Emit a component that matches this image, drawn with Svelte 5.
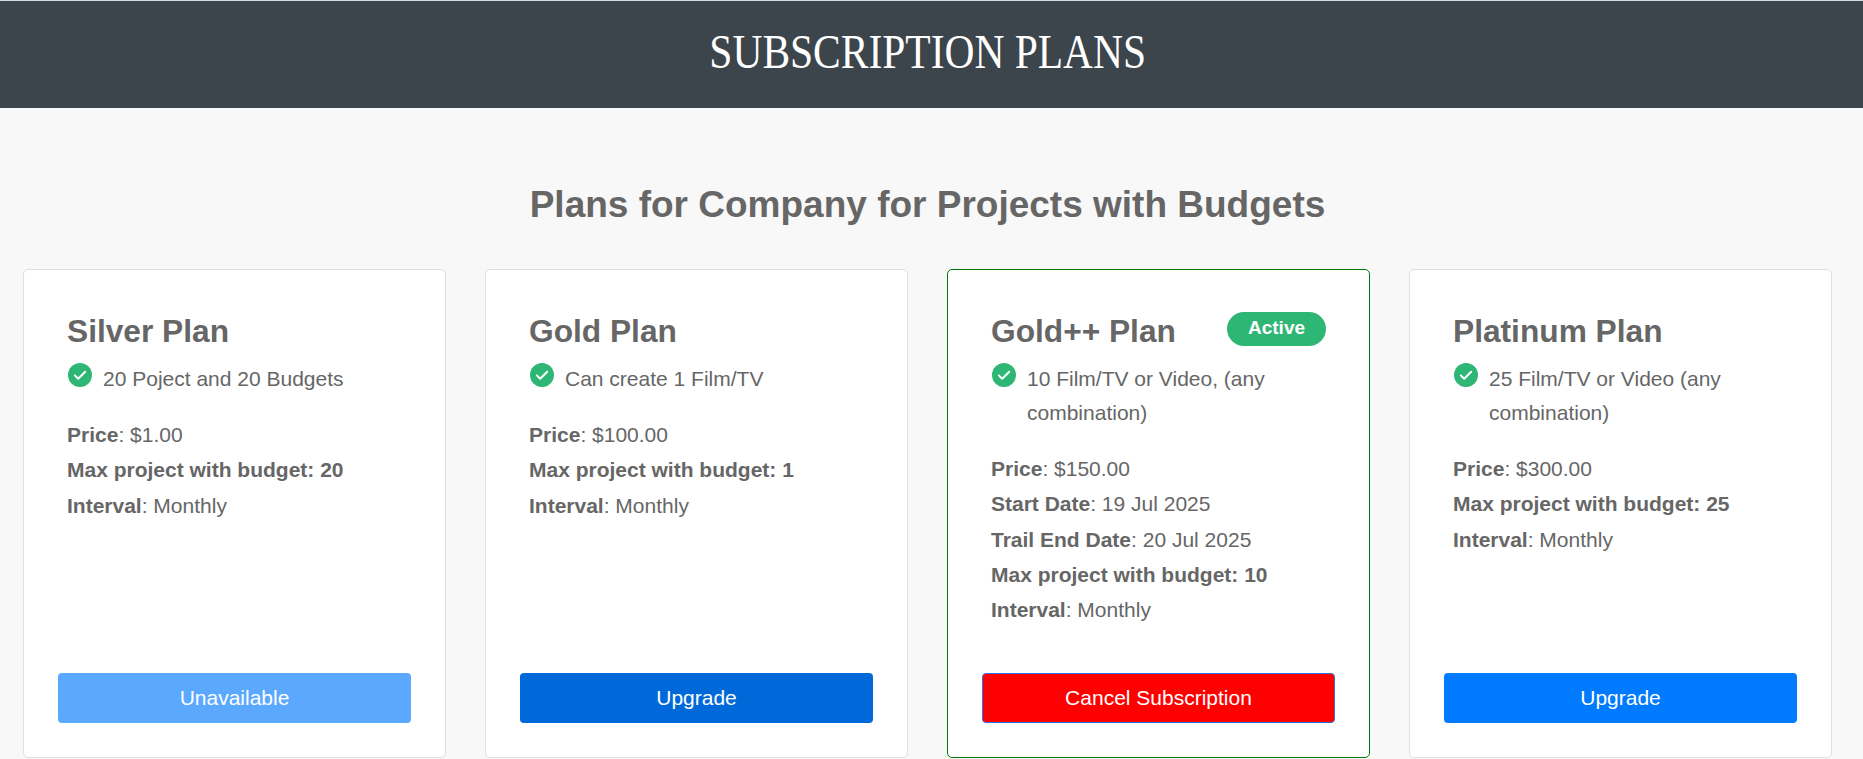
<script>
  const plans = [
    { name: 'Silver Plan', feature: '20 Poject and 20 Budgets', rows: [['Price', ': $1.00'], ['Max project with budget: 20', ''], ['Interval', ': Monthly']], action: 'Unavailable', kind: 'muted' },
    { name: 'Gold Plan', feature: 'Can create 1 Film/TV', rows: [['Price', ': $100.00'], ['Max project with budget: 1', ''], ['Interval', ': Monthly']], action: 'Upgrade', kind: 'deep' },
    { name: 'Gold++ Plan', active: true, feature: '10 Film/TV or Video, (any combination)', rows: [['Price', ': $150.00'], ['Start Date', ': 19 Jul 2025'], ['Trail End Date', ': 20 Jul 2025'], ['Max project with budget: 10', ''], ['Interval', ': Monthly']], action: 'Cancel Subscription', kind: 'danger' },
    { name: 'Platinum Plan', feature: '25 Film/TV or Video (any combination)', rows: [['Price', ': $300.00'], ['Max project with budget: 25', ''], ['Interval', ': Monthly']], action: 'Upgrade', kind: 'primary' }
  ];
</script>

<header class="top"><h1>SUBSCRIPTION PLANS</h1></header>
<main class="page">
  <h2>Plans for Company for Projects with Budgets</h2>
  <div class="grid">
    {#each plans as p}
      <article class="card" class:current={p.active}>
        <div class="body">
          <div class="title-row">
            <h3>{p.name}</h3>
            {#if p.active}<span class="badge">Active</span>{/if}
          </div>
          <div class="feature">
            <svg class="tick" viewBox="0 0 24 24" width="24" height="24" aria-hidden="true">
              <circle cx="12" cy="12" r="12" fill="#2db674" />
              <path d="M6.8 12.4l3.4 3.3 7-7" fill="none" stroke="#fff" stroke-width="2" stroke-linecap="round" stroke-linejoin="round" />
            </svg>
            <span>{p.feature}</span>
          </div>
          <ul>
            {#each p.rows as r}
              <li><b>{r[0]}</b>{r[1]}</li>
            {/each}
          </ul>
        </div>
        <button class={p.kind}>{p.action}</button>
      </article>
    {/each}
  </div>
</main>

<style>
  :global(body) {
    margin: 0;
    background: #f8f8f8;
    font-family: "Liberation Sans", Arial, sans-serif;
    color: #666;
  }
  .top {
    height: 107px;
    border-top: 1px solid #d8dadc;
    background: #3c444c;
    display: flex;
    align-items: center;
    justify-content: center;
  }
  h1 {
    margin: -6px 8px 0 0;
    font-family: "Liberation Serif", serif;
    font-weight: 400;
    font-size: 48px;
    line-height: 56px;
    color: #fff;
    transform: scaleX(0.864);
  }
  .page {
    padding: 0 31px 0 23px;
  }
  h2 {
    margin: 0;
    padding-top: 76px;
    height: 85px;
    text-align: center;
    font-size: 37px;
    line-height: 41px;
    font-weight: 700;
    color: #666;
  }
  .grid {
    display: grid;
    grid-template-columns: repeat(4, 1fr);
    gap: 39px;
  }
  .card {
    height: 489px;
    box-sizing: border-box;
    background: #fff;
    border: 1px solid #dfdfdf;
    border-radius: 5px;
    padding: 34px 34px 33px;
    display: flex;
    flex-direction: column;
  }
  .card.current {
    border-color: #007a05;
  }
  .body {
    flex: 1;
    padding: 0 9px;
  }
  .title-row {
    display: flex;
    align-items: flex-start;
    justify-content: space-between;
  }
  h3 {
    margin: 10px 0 0;
    font-size: 31.7px;
    line-height: 34px;
    font-weight: 700;
    color: #666;
  }
  .badge {
    margin: 8px 0 0;
    width: 99px;
    height: 34px;
    line-height: 32px;
    text-align: center;
    border-radius: 17px;
    background: #2db674;
    color: #fff;
    font-size: 19px;
    font-weight: 700;
  }
  .feature {
    display: flex;
    align-items: flex-start;
    gap: 11px;
    margin: 14px 0 0 1px;
    font-size: 21px;
    line-height: 34px;
  }
  .tick {
    flex: none;
    margin-top: 1px;
  }
  ul {
    list-style: none;
    margin: 21px 0 0;
    padding: 0;
    font-size: 21px;
    line-height: 35.3px;
  }
  button {
    width: 100%;
    height: 50px;
    flex: none;
    border: 0;
    border-radius: 4px;
    color: #fff;
    font: 400 21px "Liberation Sans", Arial, sans-serif;
    padding: 0;
    position: relative;
    top: -1px;
  }
  .muted { background: #5aa9ff; }
  .deep { background: #0069d9; }
  .primary { background: #007bff; }
  .danger { background: #ff0000; border: 1px solid #2a72e0; }
</style>
